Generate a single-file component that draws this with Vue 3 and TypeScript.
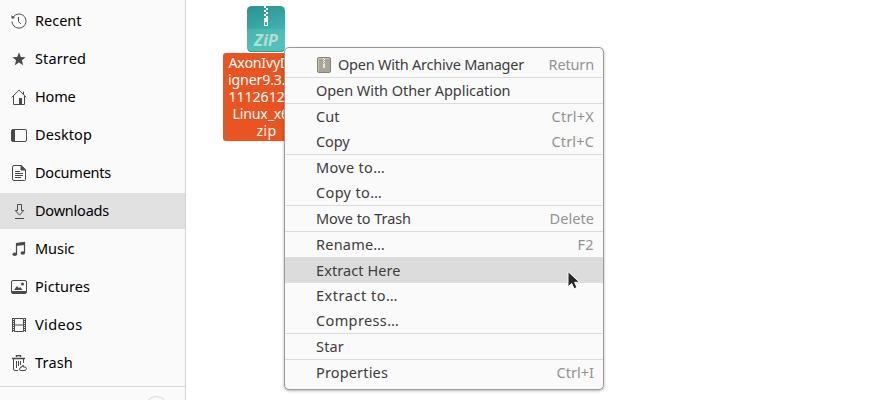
<script setup lang="ts">
interface Place { name: string; icon: string; width: number }
interface Action { label: string; width: number; keys?: string; keysWidth?: number; icon?: boolean; active?: boolean }

const places: Place[] = [
  { name: 'Recent', icon: 'recent', width: 46.5 },
  { name: 'Starred', icon: 'star', width: 51 },
  { name: 'Home', icon: 'home', width: 40.5 },
  { name: 'Desktop', icon: 'desktop', width: 57 },
  { name: 'Documents', icon: 'document', width: 76 },
  { name: 'Downloads', icon: 'download', width: 74 },
  { name: 'Music', icon: 'music', width: 39.5 },
  { name: 'Pictures', icon: 'picture', width: 55 },
  { name: 'Videos', icon: 'video', width: 47.5 },
  { name: 'Trash', icon: 'trash', width: 38 },
]

const groups: Action[][] = [
  [{ label: 'Open With Archive Manager', width: 186, keys: 'Return', keysWidth: 45.5, icon: true }],
  [{ label: 'Open With Other Application', width: 194.5 }],
  [
    { label: 'Cut', width: 23.5, keys: 'Ctrl+X', keysWidth: 42.5 },
    { label: 'Copy', width: 33.5, keys: 'Ctrl+C', keysWidth: 42.5 },
  ],
  [{ label: 'Move to…', width: 69 }, { label: 'Copy to…', width: 66 }],
  [{ label: 'Move to Trash', width: 95, keys: 'Delete', keysWidth: 44.5 }],
  [{ label: 'Rename…', width: 69, keys: 'F2', keysWidth: 16.5 }],
  [
    { label: 'Extract Here', width: 84.5, active: true },
    { label: 'Extract to…', width: 82 },
    { label: 'Compress…', width: 83 },
  ],
  [{ label: 'Star', width: 28 }],
  [{ label: 'Properties', width: 72, keys: 'Ctrl+I', keysWidth: 37.5 }],
]

const fileLines = [
  { text: 'AxonIvyDes', width: 76 },
  { text: 'igner9.3.1.2', width: 77 },
  { text: '111261213.', width: 76 },
  { text: 'Linux_x64.', width: 68 },
  { text: 'zip', width: 20 },
]

// Tracks the text so that it fills the given width.
const vFit = {
  mounted(el: HTMLElement, binding: { value: number }) {
    const natural = el.getBoundingClientRect().width
    const count = (el.textContent ?? '').length
    el.style.letterSpacing = `${(binding.value - natural) / count}px`
  },
}
</script>

<template>
  <div class="window">
    <nav class="sidebar">
      <div v-for="p in places" :key="p.name" class="place" :class="{ active: p.name === 'Downloads' }">
        <svg class="glyph" width="16" height="16" viewBox="0 0 16 16" fill="none" stroke="#4a4a4a">
          <template v-if="p.icon === 'recent'">
            <path d="M2.1 4.3A7 7 0 1 1 1 8.5" />
            <path d="M.3 2.2l.4 3.5 3.4-.8z" fill="#4a4a4a" stroke="none" />
            <path d="M7.5 4v4.5l2.3 2.3" />
          </template>
          <path v-else-if="p.icon === 'star'" d="M8 1.3l1.8 4.6 4.9.3-3.8 3.1 1.3 4.9L8 11.5l-4.2 2.7 1.3-4.9L1.3 6.2l4.9-.3z" fill="#4a4a4a" stroke="none" />
          <template v-else-if="p.icon === 'home'">
            <path d="M.8 8.3L8 1.1l7.2 7.2M2.5 7v8.5h11V7M12.5 5V2.5" />
            <path d="M8 9h3v6.5H8z" fill="#4a4a4a" stroke="none" />
          </template>
          <template v-else-if="p.icon === 'desktop'">
            <rect x=".5" y="2.5" width="15" height="12" rx="1.5" />
            <path d="M1 3h3v11H1z" fill="#4a4a4a" stroke="none" />
          </template>
          <template v-else-if="p.icon === 'document'">
            <path d="M3 .5h7.3l4.2 4.2v9.8a1 1 0 0 1-1 1H3a1.5 1.5 0 0 1-1.5-1.5V2A1.5 1.5 0 0 1 3 .5z" />
            <path d="M10 .5v4.5h4.5z" fill="#4a4a4a" />
            <path d="M4 6.5h5M4 8.5h8M4 10.5h8M4 12.5h6" />
          </template>
          <path v-else-if="p.icon === 'download'" d="M6.5 1.5h4v6h2.2l-4.2 4.6-4.2-4.6h2.2zM4 15.5h9" />
          <template v-else-if="p.icon === 'music'">
            <path d="M5.5 13V3l8-1.2V12" stroke-width="1.2" />
            <path d="M5 2l9-1.3V4L5 5.1z" fill="#4a4a4a" stroke="none" />
            <ellipse cx="3.8" cy="13.2" rx="2.3" ry="1.8" fill="#4a4a4a" stroke="none" />
            <ellipse cx="11.8" cy="12" rx="2.3" ry="1.8" fill="#4a4a4a" stroke="none" />
          </template>
          <template v-else-if="p.icon === 'picture'">
            <rect x=".5" y="1.5" width="15" height="13" rx="1.5" />
            <path d="M1 12h14v2.5H1zM3 11l3-4 2 2.2L9.2 8l2.3 3z" fill="#4a4a4a" stroke="none" />
            <circle cx="11.5" cy="5" r="1.5" fill="#4a4a4a" stroke="none" />
          </template>
          <template v-else-if="p.icon === 'video'">
            <path d="M3.5 1.5h9v13h-9zM3.5 8h9" />
            <path d="M1.5 1v14M14.5 1v14" />
            <path d="M2.5 1v14M13.5 1v14" stroke-dasharray="1 1" />
          </template>
          <template v-else>
            <path d="M5.5 2V.5h4V2M1 3.5h13" stroke-width="1.4" />
            <path d="M2.5 4v10a1.5 1.5 0 0 0 1.5 1.5h3M12.5 4v4M5.5 6v7M7.5 6v5M9.5 6v4" />
            <path d="M9 15.5h5.5l1-2-1.2-1.5h-1.8l-.5-2-1 2H9.7L8.5 14z" />
          </template>
        </svg>
        <span v-fit="p.width" class="name">{{ p.name }}</span>
      </div>
      <div class="mount"><span class="eject"></span></div>
    </nav>

    <main class="files">
      <div class="file">
        <svg class="zip" width="38" height="46" viewBox="0 0 38 46">
          <defs>
            <linearGradient id="teal" x1="0" y1="0" x2=".3" y2="1">
              <stop offset="0" stop-color="#2b9092" />
              <stop offset="1" stop-color="#49c1b7" />
            </linearGradient>
          </defs>
          <rect width="38" height="46" rx="4.5" fill="url(#teal)" />
          <path d="M0 23h38v18.5a4.5 4.5 0 0 1-4.5 4.5h-29A4.5 4.5 0 0 1 0 41.5z" fill="#62c6bc" opacity=".4" />
          <path d="M1 44q1 1.5 3.5 1.5h29q2.5 0 3.5-1.5" fill="none" stroke="#32988f" />
          <path d="M18 0v12" stroke="#fff" stroke-width="2" stroke-dasharray="2 2" />
          <path d="M20 2v12" stroke="#fff" stroke-width="2" stroke-dasharray="2 2" />
          <path d="M17 12h4v8h-4zM18 16v3h2v-3z" fill="#fff" fill-rule="evenodd" />
          <text x="7" y="39.5" textLength="24" lengthAdjust="spacingAndGlyphs" class="ziptext">ZiP</text>
        </svg>
        <div class="filename">
          <div v-for="l in fileLines" :key="l.text" class="line"><span v-fit="l.width">{{ l.text }}</span></div>
        </div>
      </div>
    </main>

    <div class="menu">
      <div v-for="(g, i) in groups" :key="i" class="group">
        <div v-for="a in g" :key="a.label" class="item" :class="{ active: a.active }">
          <svg v-if="a.icon" class="archive" width="14" height="16" viewBox="0 0 14 16">
            <rect x=".5" y=".5" width="13" height="15" rx="1.5" fill="#aaa697" stroke="#858174" />
            <path d="M1.5 14V1.5h11" fill="none" stroke="#c5c2b7" />
            <path d="M6.5 1v6" stroke="#f2f0e8" stroke-dasharray="1 1" />
            <path d="M7.5 2v6" stroke="#f2f0e8" stroke-dasharray="1 1" />
            <path d="M6 7h2v4H6z" fill="#e8e5dc" />
          </svg>
          <span v-fit="a.width" class="label">{{ a.label }}</span>
          <span v-if="a.keys" v-fit="a.keysWidth" class="label keys">{{ a.keys }}</span>
        </div>
      </div>
    </div>

    <svg class="cursor" width="14" height="20" viewBox="0 0 14 20">
      <path d="M1 1.5v15.3l3.7-3.3 2.4 5.3 2.9-1.3-2.4-5.2h5z" fill="#262626" stroke="#fff" stroke-width="1" />
    </svg>
  </div>
</template>

<style>
body { overflow: hidden; }
</style>

<style scoped>
.window {
  position: relative;
  display: flex;
  width: 883px;
  height: 400px;
  overflow: hidden;
  background: #fff;
  font-family: "Noto Sans", sans-serif;
  font-size: 14.5px;
}
.sidebar {
  box-sizing: border-box;
  flex: none;
  display: flex;
  flex-direction: column;
  gap: 2px;
  width: 186px;
  padding-top: 3px;
  border-right: 1px solid #d4d4d4;
  background: #fafafa;
  color: #000;
}
.place {
  flex: none;
  display: flex;
  align-items: center;
  gap: 8px;
  height: 36px;
  padding-left: 11px;
}
.place.active { background: #e1e1e1; }
.glyph { flex: none; }
.name {
  padding-bottom: 2px;
  white-space: nowrap;
}
.mount {
  flex: none;
  display: flex;
  justify-content: flex-end;
  align-items: flex-start;
  height: 38px;
  margin-top: 3px;
  padding: 9px 17px 0 0;
  border-top: 1px solid #d8d8d8;
}
.eject {
  box-sizing: border-box;
  width: 23px;
  height: 23px;
  border: 1px solid #d8d8d8;
  border-radius: 50%;
}
.files { padding: 6px 0 0 37px; }
.file {
  display: flex;
  flex-direction: column;
  gap: 1px;
  width: 87px;
}
.zip {
  display: block;
  margin-left: 24px;
}
.ziptext {
  fill: #b0ded8;
  font: italic bold 16px "Noto Sans", sans-serif;
}
.filename {
  box-sizing: border-box;
  width: 87px;
  height: 88px;
  padding-top: 1px;
  border-radius: 3px;
  background: #e95420;
  color: #fff;
  font-size: 14.2px;
}
.line {
  display: flex;
  justify-content: center;
  height: 17px;
  line-height: 17px;
  white-space: nowrap;
}
.menu {
  position: absolute;
  left: 284px;
  top: 47px;
  box-sizing: border-box;
  width: 320px;
  padding: 4px 0;
  border: 1px solid #999;
  border-radius: 5px;
  background: #fafafa;
  box-shadow: 0 1px 3px rgba(0, 0, 0, 0.3);
  color: #3d3d3d;
}
.group + .group { border-top: 1px solid #dcdcdc; }
.item {
  display: flex;
  align-items: center;
  height: 25px;
  padding: 0 9px 0 31px;
  white-space: nowrap;
}
.item.active { background: #dcdcdc; }
.label { padding-bottom: 2px; }
.archive {
  flex: none;
  margin: 0 7px 0 1px;
}
.keys {
  margin-left: auto;
  color: #929292;
}
.cursor {
  position: absolute;
  left: 567px;
  top: 270px;
}
</style>
